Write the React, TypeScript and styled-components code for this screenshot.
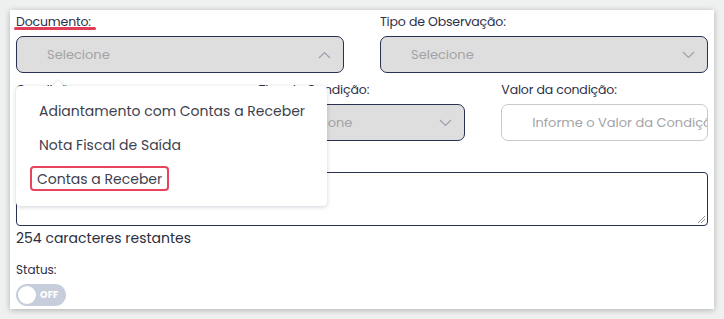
import React from "react";
import styled, { createGlobalStyle } from "styled-components";

const GlobalStyle = createGlobalStyle`
  html, body { margin: 0; padding: 0; background: #eef1f0; }
  body { font-family: "Poppins", "Open Sans", "Noto Sans", sans-serif; }
  * { box-sizing: border-box; }
`;

const Page = styled.div`
  width: 724px;
  height: 319px;
  padding: 10px 10px 10px 10px;
`;

const Card = styled.div`
  position: relative;
  width: 704px;
  height: 299px;
  background: #ffffff;
  box-shadow: 0 1px 6px rgba(0, 0, 0, 0.28);
  padding: 3px 6px 0 6px;
  display: flex;
  flex-direction: column;
`;

const Grid = styled.div<{ $cols: number }>`
  display: grid;
  grid-template-columns: repeat(${(p) => p.$cols}, minmax(0, 1fr));
  column-gap: 36px;
`;

const Field = styled.div`
  display: flex;
  flex-direction: column;
  min-width: 0;
`;

const Label = styled.label`
  font-size: 12.5px;
  line-height: 18px;
  color: #2c3048;
  height: 23px;
  letter-spacing: -0.15px;
  white-space: nowrap;
`;

const SelectBox = styled.div<{ $white?: boolean }>`
  height: 37px;
  border: 1px solid ${(p) => (p.$white ? "#c9c9cc" : "#2a3150")};
  background: ${(p) => (p.$white ? "#ffffff" : "#dedede")};
  border-radius: 7px;
  display: flex;
  align-items: center;
  justify-content: space-between;
  padding: 0 12px 0 30px;
  overflow: hidden;
`;

const Placeholder = styled.span`
  font-size: 13px;
  color: #a3a3a6;
  white-space: nowrap;
`;

const RowGap = styled.div<{ $h: number }>`
  height: ${(p) => p.$h}px;
  flex: none;
`;

const TextArea = styled.div`
  position: relative;
  height: 54px;
  border: 1px solid #2a3150;
  border-radius: 4px;
`;

const Grip = styled.svg`
  position: absolute;
  right: 1px;
  bottom: 1px;
`;

const Counter = styled.div`
  font-size: 14px;
  line-height: 22px;
  color: #2a2d40;
  margin-top: 1px;
`;

const StatusLabel = styled.div`
  font-size: 12px;
  line-height: 16px;
  color: #2c3048;
  margin-top: 13px;
`;

const Toggle = styled.div`
  margin-top: 6px;
  width: 50px;
  height: 22px;
  border-radius: 11px;
  background: #c7cedb;
  display: flex;
  align-items: center;
  padding: 0 2px;
  gap: 4px;
`;

const Knob = styled.div`
  width: 18px;
  height: 18px;
  border-radius: 50%;
  background: #ffffff;
`;

const ToggleText = styled.span`
  color: #ffffff;
  font-size: 9.5px;
  font-weight: 700;
  letter-spacing: 0.2px;
`;

const Underline = styled.div`
  position: absolute;
  left: 4px;
  top: 17px;
  width: 82px;
  height: 2.5px;
  border-radius: 2px;
  background: #e23d58;
`;

const Menu = styled.div`
  position: absolute;
  left: 6px;
  top: 76px;
  width: 311px;
  height: 120px;
  background: #ffffff;
  border-radius: 4px;
  box-shadow: 0 1px 4px rgba(40, 50, 80, 0.22);
  display: flex;
  flex-direction: column;
  padding: 12px 0 0 14px;
`;

const Caret = styled.div`
  position: absolute;
  left: 38px;
  top: -4px;
  width: 8px;
  height: 8px;
  background: #ffffff;
  transform: rotate(45deg);
  box-shadow: -1px -1px 1px rgba(40, 50, 80, 0.1);
`;

const Item = styled.div<{ $marked?: boolean }>`
  align-self: flex-start;
  font-size: 14px;
  line-height: 20px;
  color: #3e3f4e;
  padding: 0 5px 0 5px;
  height: 25px;
  display: flex;
  align-items: center;
  margin-left: ${(p) => (p.$marked ? "0px" : "2px")};
  border: 2.5px solid ${(p) => (p.$marked ? "#e8435d" : "transparent")};
  border-radius: 4px;
  white-space: nowrap;
  & + & {
    margin-top: 9px;
  }
`;

const Chevron = ({ up }: { up?: boolean }) => (
  <svg width="13" height="8" viewBox="0 0 13 8">
    <polyline
      points={up ? "1,7 6.5,1.5 12,7" : "1,1 6.5,6.5 12,1"}
      fill="none"
      stroke="#9aa0ad"
      strokeWidth="1.2"
    />
  </svg>
);

export default function App() {
  return (
    <>
      <GlobalStyle />
      <Page>
        <Card>
          <Grid $cols={2}>
            <Field>
              <Label>Documento:</Label>
              <SelectBox>
                <Placeholder>Selecione</Placeholder>
                <Chevron up />
              </SelectBox>
            </Field>
            <Field>
              <Label>Tipo de Observação:</Label>
              <SelectBox>
                <Placeholder>Selecione</Placeholder>
                <Chevron />
              </SelectBox>
            </Field>
          </Grid>
          <RowGap $h={8} />
          <Grid $cols={3}>
            <Field>
              <Label>Condição:</Label>
              <SelectBox>
                <Placeholder>Selecione</Placeholder>
                <Chevron />
              </SelectBox>
            </Field>
            <Field>
              <Label>Tipo de Condição:</Label>
              <SelectBox>
                <Placeholder>Selecione</Placeholder>
                <Chevron />
              </SelectBox>
            </Field>
            <Field>
              <Label>Valor da condição:</Label>
              <SelectBox $white>
                <Placeholder>Informe o Valor da Condição</Placeholder>
              </SelectBox>
            </Field>
          </Grid>
          <RowGap $h={8} />
          <Field>
            <Label>Observação:</Label>
            <TextArea>
              <Grip width="9" height="9" viewBox="0 0 9 9">
                <line x1="8" y1="1" x2="1" y2="8" stroke="#777" strokeWidth="0.8" />
                <line x1="8" y1="4" x2="4" y2="8" stroke="#777" strokeWidth="0.8" />
              </Grip>
            </TextArea>
          </Field>
          <Counter>254 caracteres restantes</Counter>
          <StatusLabel>Status:</StatusLabel>
          <Toggle>
            <Knob />
            <ToggleText>OFF</ToggleText>
          </Toggle>
          <Underline />
          <Menu>
            <Caret />
            <Item>Adiantamento com Contas a Receber</Item>
            <Item>Nota Fiscal de Saída</Item>
            <Item $marked>Contas a Receber</Item>
          </Menu>
        </Card>
      </Page>
    </>
  );
}
